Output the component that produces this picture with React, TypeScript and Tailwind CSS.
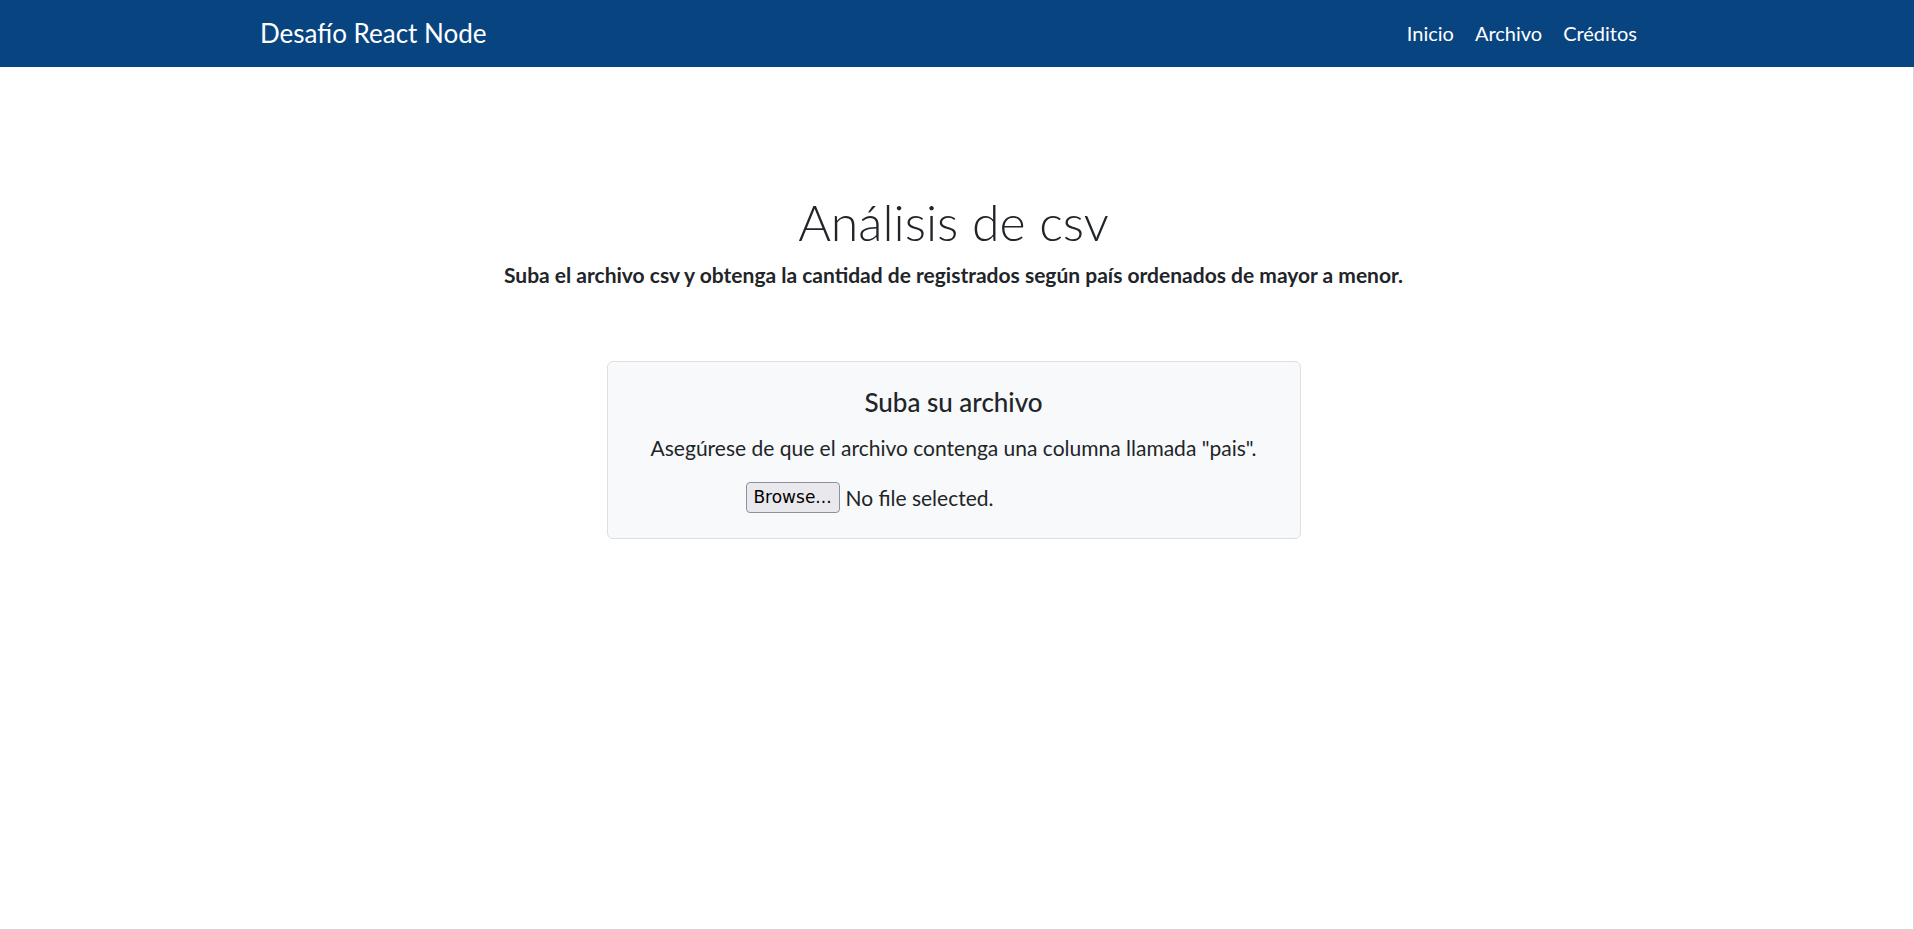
import React from "react";

export default function App() {
  const font = { fontFamily: "Lato, 'Noto Sans', sans-serif" };
  return (
    <div className="w-[1914px] h-[930px] bg-white text-[#212529] overflow-hidden" style={font}>
      <nav className="h-[67px] bg-[#084480] flex items-center justify-between pl-[260px] pr-[277px] pb-[2px]">
        <a className="text-white text-[26px] leading-none">Desafío React Node</a>
        <div className="flex items-center gap-[21px] text-white text-[20px] leading-none">
          <a>Inicio</a>
          <a>Archivo</a>
          <a>Créditos</a>
        </div>
      </nav>
      <main className="h-[863px] border-r border-b border-[#d6d6d6] flex flex-col items-center pr-[6px]">
        <h1 className="mt-[130px] text-[50px] font-light leading-none">Análisis de csv</h1>
        <p className="mt-[17px] text-[21px] font-bold leading-none">
          Suba el archivo csv y obtenga la cantidad de registrados según país ordenados de mayor a menor.
        </p>
        <div className="mt-[76px] w-[694px] h-[178px] bg-[#f8f9fa] border border-[#dcdfe3] rounded-[6px] flex flex-col items-center">
          <h2 className="mt-[27px] text-[26px] font-medium leading-none">Suba su archivo</h2>
          <p className="mt-[22px] text-[21px] leading-none">Asegúrese de que el archivo contenga una columna llamada "pais".</p>
          <div className="mt-[24px] self-start ml-[138px] flex items-center gap-[6px]">
            <button
              className="h-[31px] w-[94px] bg-[#e9e9ed] border border-[#8f8f9d] rounded-[4px] text-black leading-none"
              style={{ fontFamily: "'DejaVu Sans', sans-serif", fontSize: "17px" }}
            >
              Browse...
            </button>
            <span className="text-[21px] leading-none">No file selected.</span>
          </div>
        </div>
      </main>
    </div>
  );
}
